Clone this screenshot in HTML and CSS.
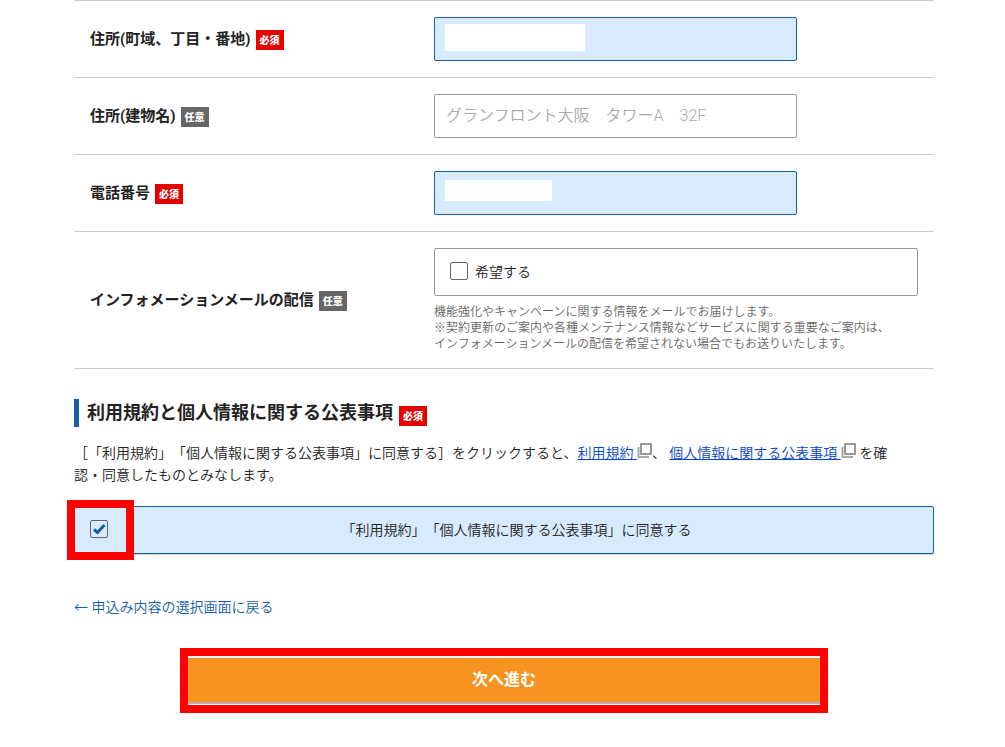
FILE: index.html
```
<!DOCTYPE html>
<html lang="ja">

<head>
    <meta charset="UTF-8">
    <title>お申込み</title>
    <link rel="stylesheet" href="styles.css">
</head>

<body>

    <form class="form">
        <div class="row">
            <div class="row-label">
                <label for="street">住所(町域、丁目・番地)</label>
                <span class="badge">必須</span>
            </div>
            <div class="row-field">
                <input type="text" id="street" class="text filled">
                <span class="mask mask-street"></span>
            </div>
        </div>

        <div class="row">
            <div class="row-label">
                <label for="building">住所(建物名)</label>
                <span class="badge optional">任意</span>
            </div>
            <div class="row-field">
                <input type="text" id="building" class="text" placeholder="グランフロント大阪　タワーA　32F">
            </div>
        </div>

        <div class="row">
            <div class="row-label">
                <label for="tel">電話番号</label>
                <span class="badge">必須</span>
            </div>
            <div class="row-field">
                <input type="tel" id="tel" class="text filled">
                <span class="mask mask-tel"></span>
            </div>
        </div>

        <div class="row">
            <div class="row-label">
                <span>インフォメーションメールの配信</span>
                <span class="badge optional">任意</span>
            </div>
            <div class="row-field">
                <label class="check-box">
                    <input type="checkbox" class="check">
                    <span>希望する</span>
                </label>
                <p class="note">機能強化やキャンペーンに関する情報をメールでお届けします。<br>※契約更新のご案内や各種メンテナンス情報などサービスに関する重要なご案内は、<br>インフォメーションメールの配信を希望されない場合でもお送りいたします。</p>
            </div>
        </div>

        <h2 class="heading">利用規約と個人情報に関する公表事項 <span class="badge">必須</span></h2>

        <p class="terms">［「利用規約」「個人情報に関する公表事項」に同意する］をクリックすると、<a href="#">利用規約 <svg class="window-icon" viewBox="0 0 15 15"><path d="M1.5 4v10H12" /><path class="front" d="M4 1h10v10h-10z" /></svg></a>、 <a href="#">個人情報に関する公表事項 <svg class="window-icon" viewBox="0 0 15 15"><path d="M1.5 4v10H12" /><path class="front" d="M4 1h10v10h-10z" /></svg></a> を確認・同意したものとみなします。</p>

        <div class="agree">
            <label class="check-box filled">
                <input type="checkbox" class="check" checked>
                <span class="agree-text">「利用規約」「個人情報に関する公表事項」に同意する</span>
            </label>
            <span class="marker"></span>
        </div>

        <a href="#" class="back">← 申込み内容の選択画面に戻る</a>

        <div class="submit-area">
            <button type="submit" class="submit">次へ進む</button>
        </div>
    </form>

</body>

</html>
```
FILE: styles.css
```
* {
    box-sizing: border-box;
}

body {
    margin: 0;
    padding: 0 71px 0 74px;
    font-family: Roboto, 'Noto Sans CJK JP', sans-serif;
    font-size: 14px;
    font-weight: 350;
    line-height: 22px;
    color: #222;
    background: #fff;
    text-spacing-trim: space-all;
}

.form {
    border-top: 1px solid #ccc;
}

.row {
    display: flex;
    align-items: center;
    padding: 16px;
    border-bottom: 1px solid #ccc;
}

.row-label {
    display: flex;
    flex: 1;
    align-items: center;
    gap: 5px;
    font-size: 15px;
    font-weight: bold;
}

.row-field {
    position: relative;
    width: 484px;
}

.badge {
    display: inline-block;
    margin-top: 2px;
    padding: 1px 4px 0;
    font-size: 10px;
    font-weight: 900;
    line-height: 19px;
    color: #fff;
    background: #e60000;
}

.optional {
    background: #666;
}

.text {
    display: block;
    width: 75%;
    height: 44px;
    padding: 0 11px 2px;
    border: 1px solid #999;
    border-radius: 2px;
    font-family: inherit;
    font-size: 16px;
    font-weight: inherit;
    color: #222;
    background: #fff;
}

.text::placeholder {
    color: #aaa;
}

.filled {
    border-color: #145fa9;
    background: #d8eafe;
}

/* blanked out personal data */
.mask {
    position: absolute;
    left: 11px;
    background: #fff;
}

.mask-street {
    top: 7px;
    width: 140px;
    height: 27px;
}

.mask-tel {
    top: 9px;
    width: 107px;
    height: 21px;
}

.check-box {
    display: flex;
    align-items: center;
    height: 48px;
    padding: 0 15px;
    border: 1px solid #999;
    border-radius: 2px;
}

.check {
    appearance: none;
    width: 18px;
    height: 18px;
    margin: 0 7px 2px 0;
    border: 1px solid #666;
    border-radius: 2px;
    background: #fff;
}

.check:checked {
    background: #d8eafe url("data:image/svg+xml,%3Csvg xmlns='http://www.w3.org/2000/svg' viewBox='0 0 16 16'%3E%3Cpath d='M3 8.5l3.5 3L13.5 4' fill='none' stroke='%23145fa9' stroke-width='3'/%3E%3C/svg%3E") center / 16px no-repeat;
}

.note {
    margin: 8px 0 0;
    font-size: 12px;
    line-height: 16px;
    color: #666;
    white-space: nowrap;
}

.heading {
    display: flex;
    align-items: center;
    gap: 6px;
    margin: 30px 0 15px;
    padding-left: 8px;
    border-left: 5px solid #145fa9;
    font-size: 18px;
    line-height: 28px;
}

.heading .badge {
    margin-top: 6px;
}

.terms {
    margin: 0 0 20px;
    padding-right: 30px;
}

.terms a {
    color: #0645c8;
}

.window-icon {
    width: 15px;
    height: 15px;
    fill: none;
    stroke: #aaa;
    stroke-width: 2;
}

.window-icon .front {
    fill: #fff;
    stroke: #999;
}

.agree {
    position: relative;
}

.agree .check-box {
    border-color: #145fa9;
    box-shadow: 0 1px 0 #ccc;
}

.agree-text {
    flex: 1;
    text-align: center;
}

.marker {
    position: absolute;
    top: -6px;
    left: -7px;
    width: 67px;
    height: 60px;
    border: 8px solid #f00;
}

.back {
    display: inline-block;
    margin-top: 42px;
    color: #145fa9;
    text-decoration: none;
}

.submit-area {
    margin: 30px 106px;
    padding: 2px 0 1px;
    border: 8px solid #f00;
}

.submit {
    display: block;
    width: 100%;
    height: 46px;
    padding: 0 0 4px;
    border: 0;
    border-bottom: 2px solid #b3b3b3;
    font-family: inherit;
    font-size: 16px;
    font-weight: bold;
    color: #fff;
    background: #f79420;
}
```
